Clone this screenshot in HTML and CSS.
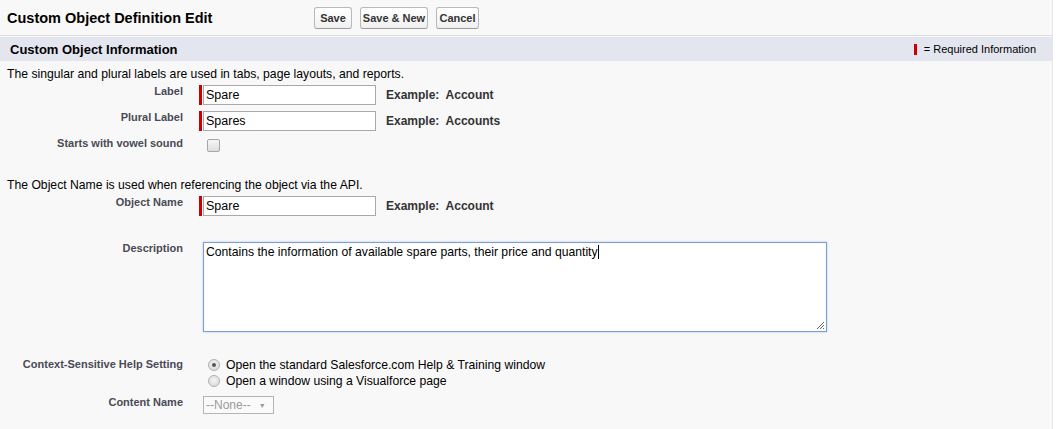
FILE: index.html
```html
<!DOCTYPE html>
<html>
<head>
<meta charset="utf-8">
<link rel="stylesheet" href="styles.css">
</head>
<body>
<div class="page">
  <div class="pagehead">
    <h1 class="title">Custom Object Definition Edit</h1>
    <div class="buttons">
      <span class="btn btn-save">Save</span>
      <span class="btn btn-savenew">Save &amp; New</span>
      <span class="btn btn-cancel">Cancel</span>
    </div>
  </div>
  <div class="section-head">
    <h2 class="section-title">Custom Object Information</h2>
    <span class="legend"><span class="legend-bar"></span>= Required Information</span>
  </div>
  <div class="form">
    <p class="intro intro-first">The singular and plural labels are used in tabs, page layouts, and reports.</p>
    <div class="row row-label">
      <div class="lbl">Label</div>
      <div class="field required"><span class="req"></span><span class="input">Spare</span><span class="example">Example:&nbsp; Account</span></div>
    </div>
    <div class="row row-plural">
      <div class="lbl">Plural Label</div>
      <div class="field required"><span class="req"></span><span class="input">Spares</span><span class="example">Example:&nbsp; Accounts</span></div>
    </div>
    <div class="row row-vowel">
      <div class="lbl">Starts with vowel sound</div>
      <div class="field plain"><span class="checkbox"></span></div>
    </div>
    <p class="intro intro-second">The Object Name is used when referencing the object via the API.</p>
    <div class="row row-name">
      <div class="lbl">Object Name</div>
      <div class="field required"><span class="req"></span><span class="input">Spare</span><span class="example">Example:&nbsp; Account</span></div>
    </div>
    <div class="row row-desc">
      <div class="lbl">Description</div>
      <div class="field plain">
        <div class="textarea">Contains the information of available spare parts, their price and quantity<span class="caret"></span>
          <svg class="grip" width="9" height="9" viewBox="0 0 9 9"><path d="M8 1 L1 8 M8 4 L4 8 M8 7 L7 8" stroke="#666" stroke-width="1" fill="none"/></svg>
        </div>
      </div>
    </div>
    <div class="row row-help">
      <div class="lbl">Context-Sensitive Help Setting</div>
      <div class="field plain radios">
        <div class="radio-line"><span class="radio checked"></span>Open the standard Salesforce.com Help &amp; Training window</div>
        <div class="radio-line"><span class="radio"></span>Open a window using a Visualforce page</div>
      </div>
    </div>
    <div class="row row-content">
      <div class="lbl">Content Name</div>
      <div class="field plain"><span class="select">--None--<span class="arrow">&#9660;</span></span></div>
    </div>
  </div>
</div>
</body>
</html>
```

FILE: styles.css
```css
html, body {
  margin: 0;
  padding: 0;
  background: #ffffff;
}
body {
  font-family: "Liberation Sans", Arial, sans-serif;
  color: #000;
}
.page {
  width: 1052px;
  height: 429px;
  background: #f8f8f8;
  border-right: 1px solid #e6e6e6;
  overflow: hidden;
}
.pagehead {
  height: 36px;
  display: flex;
  align-items: center;
  padding-left: 7px;
  border-bottom: 1px solid #dcdcdc;
  box-sizing: border-box;
}
.title {
  margin: 0;
  width: 307px;
  font-size: 14.5px;
  font-weight: bold;
  color: #000;
}
.buttons {
  display: flex;
  gap: 8px;
}
.btn {
  display: flex;
  align-items: center;
  justify-content: center;
  height: 22px;
  box-sizing: border-box;
  border: 1px solid #b9b9b9;
  border-bottom-color: #9c9c9c;
  border-radius: 3px;
  background: linear-gradient(#ffffff, #f0f0f0);
  font-size: 11px;
  font-weight: bold;
  color: #333;
}
.btn-save { width: 38px; }
.btn-savenew { width: 68px; }
.btn-cancel { width: 43px; }

.section-head {
  height: 24px;
  margin-top: 1px;
  background: #e3e6ee;
  display: flex;
  align-items: center;
  justify-content: space-between;
  padding: 0 16px 0 10px;
}
.section-title {
  margin: 0;
  font-size: 13px;
  font-weight: bold;
  color: #000;
}
.legend {
  display: flex;
  align-items: center;
  font-size: 11px;
  color: #000;
}
.legend-bar {
  width: 3px;
  height: 11px;
  background: #c00;
  margin-right: 7px;
}

.form {
  padding-left: 7px;
}
.intro {
  margin: 0;
  font-size: 12.2px;
  line-height: 14px;
  color: #000;
}
.intro-first { margin-top: 6px; }
.intro-second { margin-top: 26px; }

.row {
  display: grid;
  grid-template-columns: 176px 1fr;
  column-gap: 16px;
  align-items: start;
}
.lbl {
  text-align: right;
  font-size: 11px;
  font-weight: bold;
  line-height: 13px;
  color: #4a4a56;
}
.field {
  display: flex;
  align-items: center;
}
.field.plain { padding-left: 4px; }
.req {
  width: 3px;
  height: 20px;
  background: #c00;
  margin-right: 1px;
}
.input {
  width: 173px;
  height: 20px;
  box-sizing: border-box;
  border: 1px solid #a9a9a9;
  background: #fff;
  font-size: 12.5px;
  line-height: 18px;
  padding-left: 2px;
  color: #000;
}
.example {
  margin-left: 10px;
  margin-top: -1px;
  font-size: 12px;
  font-weight: bold;
  color: #333;
}
.row-label { margin-top: 4px; }
.row-plural { margin-top: 6px; }
.row-vowel { margin-top: 6px; }
.checkbox {
  width: 13px;
  height: 13px;
  box-sizing: border-box;
  margin-top: 2px;
  margin-left: 4px;
  border: 1px solid #a6a6a6;
  border-radius: 2px;
  background: linear-gradient(#f6f6f6, #dedede);
}
.row-name { margin-top: 4px; }
.row-desc { margin-top: 26px; }
.textarea {
  position: relative;
  width: 624px;
  height: 90px;
  box-sizing: border-box;
  border: 1px solid #7f9fd0;
  box-shadow: 0 0 2px #a9c3e8, inset 0 0 1px #c9d8ef;
  background: #fff;
  font-size: 12.2px;
  line-height: 14px;
  padding: 2px 2px;
  color: #000;
}
.caret {
  display: inline-block;
  width: 1px;
  height: 14px;
  background: #000;
  vertical-align: top;
}
.grip {
  position: absolute;
  right: 1px;
  bottom: 1px;
}
.row-help { margin-top: 26px; }
.radios {
  flex-direction: column;
  align-items: flex-start;
  margin-top: -1px;
}
.radio-line {
  display: flex;
  align-items: center;
  font-size: 12.2px;
  line-height: 16px;
  color: #000;
}
.radio {
  width: 12px;
  height: 12px;
  box-sizing: border-box;
  border: 1px solid #b0b0b0;
  border-radius: 50%;
  background: radial-gradient(circle at 50% 40%, #f4f4f4, #d6d6d6);
  margin: 0 6px 0 5px;
  position: relative;
}
.radio.checked::after {
  content: "";
  position: absolute;
  left: 3px;
  top: 3px;
  width: 4px;
  height: 4px;
  border-radius: 50%;
  background: #555;
}
.row-content { margin-top: 7px; }
.select {
  display: flex;
  align-items: center;
  width: 71px;
  height: 18px;
  box-sizing: border-box;
  border: 1px solid #b5b5b5;
  background: #fafafa;
  font-size: 12px;
  color: #9a9a9a;
  padding-left: 2px;
}
.arrow {
  font-size: 7px;
  margin-left: 8px;
  color: #9a9a9a;
}
```
